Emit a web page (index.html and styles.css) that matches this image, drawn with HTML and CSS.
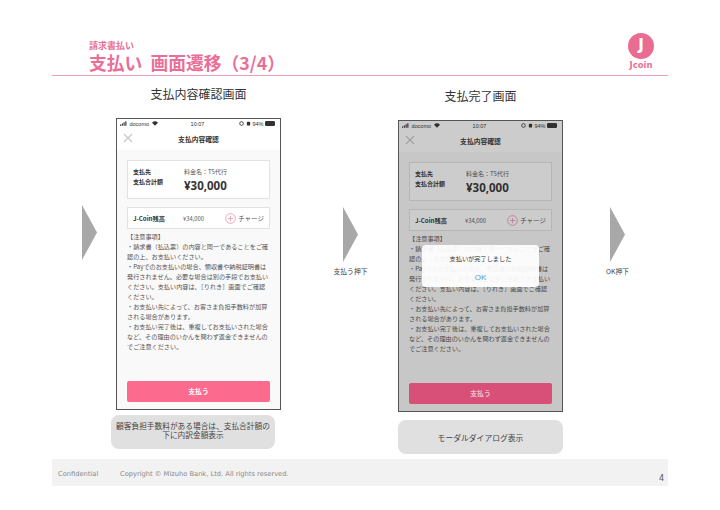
FILE: index.html
```html
<!DOCTYPE html>
<html lang="ja">
<head>
  <meta charset="UTF-8" />
  <title>支払い 画面遷移（3/4）</title>
  <link rel="stylesheet" href="styles.css">
</head>
<body>
  <div class="slide">
    <header class="head">
      <div class="head-text">
        <div class="head-sub">請求書払い</div>
        <h1>支払い&nbsp;&nbsp;画面遷移（3/4）</h1>
      </div>
      <div class="logo">
        <div class="logo-mark">J</div>
        <div class="logo-name">Jcoin</div>
      </div>
    </header>

    <main class="flow">
      <div class="step step-1">
        <svg class="arrow" viewBox="0 0 15 55"><polygon points="0,0 15,27.5 0,55" /></svg>
      </div>

      <section class="screen">
        <h2>支払内容確認画面</h2>
        <div class="phone">
          <div class="status">
            <span class="status-left">
              <svg class="signal" viewBox="0 0 9 5"><path d="M0 3.5h1.2V5H0zM2 2.4h1.2V5H2zM4 1.2h1.2V5H4zM6 0h1.2v5H6z" /></svg>
              docomo
              <svg class="wifi" viewBox="0 0 8 6"><path d="M4 6 0 2a5.7 5.7 0 0 1 8 0z" /></svg>
            </span>
            <span class="status-time">10:07</span>
            <span class="status-right">
              <svg class="alarm" viewBox="0 0 6 6"><circle cx="3" cy="3" r="2.2" fill="none" stroke="#333" /></svg>
              <svg class="alarm" viewBox="0 0 6 6"><rect x="1" y="1" width="4" height="4.4" rx="1" /></svg>
              94%
              <span class="battery"></span>
            </span>
          </div>
          <div class="nav">
            <svg class="close" viewBox="0 0 10 10"><path d="M1 1l8 8M9 1l-8 8" /></svg>
            <span class="nav-title">支払内容確認</span>
          </div>
          <div class="phone-body">
            <div class="card pay-card">
              <div class="pay-labels">
                <div>支払先</div>
                <div>支払合計額</div>
              </div>
              <div>
                <div class="pay-name">料金名：TS代行</div>
                <div class="pay-amount">¥30,000</div>
              </div>
            </div>
            <div class="card balance-card">
              <span class="balance-label">J-Coin残高</span>
              <span class="balance-value">¥34,000</span>
              <span class="charge">
                <svg class="plus" viewBox="0 0 12 12"><circle cx="6" cy="6" r="5.3" /><path d="M6 3v6M3 6h6" /></svg>
                チャージ
              </span>
            </div>
            <div class="terms">
              <div>【注意事項】</div>
              <div>・請求書（払込票）の内容と同一であることをご確</div>
              <div>認の上、お支払いください。</div>
              <div>・Payでのお支払いの場合、領収書や納税証明書は</div>
              <div>発行されません。必要な場合は別の手段でお支払い</div>
              <div>ください。支払い内容は、［りれき］画面でご確認</div>
              <div>ください。</div>
              <div>・お支払い先によって、お客さま負担手数料が加算</div>
              <div>される場合があります。</div>
              <div>・お支払い完了後は、重複してお支払いされた場合</div>
              <div>など、その理由のいかんを問わず返金できませんの</div>
              <div>でご注意ください。</div>
            </div>
            <div class="pay-btn">支払う</div>
          </div>
        </div>
        <div class="note note-1">顧客負担手数料がある場合は、支払合計額の<br>下に内訳金額表示</div>
      </section>

      <div class="step step-2">
        <svg class="arrow" viewBox="0 0 15 55"><polygon points="0,0 15,27.5 0,55" /></svg>
        <div class="step-label">支払う押下</div>
      </div>

      <section class="screen screen-done">
        <h2>支払完了画面</h2>
        <div class="phone">
          <div class="status">
            <span class="status-left">
              <svg class="signal" viewBox="0 0 9 5"><path d="M0 3.5h1.2V5H0zM2 2.4h1.2V5H2zM4 1.2h1.2V5H4zM6 0h1.2v5H6z" /></svg>
              docomo
              <svg class="wifi" viewBox="0 0 8 6"><path d="M4 6 0 2a5.7 5.7 0 0 1 8 0z" /></svg>
            </span>
            <span class="status-time">10:07</span>
            <span class="status-right">
              <svg class="alarm" viewBox="0 0 6 6"><circle cx="3" cy="3" r="2.2" fill="none" stroke="#333" /></svg>
              <svg class="alarm" viewBox="0 0 6 6"><rect x="1" y="1" width="4" height="4.4" rx="1" /></svg>
              94%
              <span class="battery"></span>
            </span>
          </div>
          <div class="nav">
            <svg class="close" viewBox="0 0 10 10"><path d="M1 1l8 8M9 1l-8 8" /></svg>
            <span class="nav-title">支払内容確認</span>
          </div>
          <div class="phone-body">
            <div class="card pay-card">
              <div class="pay-labels">
                <div>支払先</div>
                <div>支払合計額</div>
              </div>
              <div>
                <div class="pay-name">料金名：TS代行</div>
                <div class="pay-amount">¥30,000</div>
              </div>
            </div>
            <div class="card balance-card">
              <span class="balance-label">J-Coin残高</span>
              <span class="balance-value">¥34,000</span>
              <span class="charge">
                <svg class="plus" viewBox="0 0 12 12"><circle cx="6" cy="6" r="5.3" /><path d="M6 3v6M3 6h6" /></svg>
                チャージ
              </span>
            </div>
            <div class="terms">
              <div>【注意事項】</div>
              <div>・請求書（払込票）の内容と同一であることをご確</div>
              <div>認の上、お支払いください。</div>
              <div>・Payでのお支払いの場合、領収書や納税証明書は</div>
              <div>発行されません。必要な場合は別の手段でお支払い</div>
              <div>ください。支払い内容は、［りれき］画面でご確認</div>
              <div>ください。</div>
              <div>・お支払い先によって、お客さま負担手数料が加算</div>
              <div>される場合があります。</div>
              <div>・お支払い完了後は、重複してお支払いされた場合</div>
              <div>など、その理由のいかんを問わず返金できませんの</div>
              <div>でご注意ください。</div>
            </div>
            <div class="pay-btn">支払う</div>
          </div>
          <div class="overlay"></div>
          <div class="dialog">
            <div class="dialog-text">支払いが完了しました</div>
            <div class="dialog-ok">OK</div>
          </div>
        </div>
        <div class="note">モーダルダイアログ表示</div>
      </section>

      <div class="step step-3">
        <svg class="arrow" viewBox="0 0 15 55"><polygon points="0,0 15,27.5 0,55" /></svg>
        <div class="step-label">OK押下</div>
      </div>
    </main>

    <footer class="foot">
      <span class="foot-conf">Confidential</span>
      <span class="foot-copy">Copyright © Mizuho Bank, Ltd. All rights reserved.</span>
      <span class="foot-page">4</span>
    </footer>
  </div>
</body>
</html>
```

FILE: styles.css
```css
* {
  box-sizing: border-box;
}

body {
  margin: 0;
  background-color: #fff;
  color: #444;
  font-family: 'Noto Sans CJK JP', sans-serif;
}

.slide {
  width: 720px;
  height: 510px;
  overflow: hidden;
  display: flex;
  flex-direction: column;
}

/* header */
.head {
  height: 76px;
  margin: 0 52px;
  padding: 32px 14px 0 37px;
  border-bottom: 1px solid #ee9db7;
  display: flex;
  justify-content: space-between;
}

.head-sub {
  font-size: 9px;
  line-height: 10px;
  font-weight: bold;
  color: #e96f98;
  margin-top: 9px;
}

.head h1 {
  margin: 1px 0 0;
  font-size: 17.8px;
  line-height: 20px;
  font-weight: bold;
  color: #e96f98;
}

.logo {
  margin-top: 1px;
  display: flex;
  flex-direction: column;
  align-items: center;
}

.logo-mark {
  width: 26px;
  height: 26px;
  border-radius: 50%;
  background-color: #ea6c93;
  color: #fff;
  font-family: 'DejaVu Sans', sans-serif;
  font-size: 15px;
  line-height: 25px;
  font-weight: bold;
  text-align: center;
}

.logo-name {
  font-family: 'DejaVu Sans', sans-serif;
  font-size: 8.5px;
  line-height: 12px;
  font-weight: bold;
  color: #e96f98;
}

/* screens and arrows */
.flow {
  flex: 1;
  display: grid;
  grid-template-columns: 116px 165px 117px 165px 1fr;
}

.screen h2 {
  margin: 9px 0 0;
  height: 33px;
  font-size: 12px;
  line-height: 17px;
  font-weight: normal;
  text-align: center;
  color: #333;
}

.screen-done h2 {
  margin-top: 11px;
}

.step {
  display: flex;
  flex-direction: column;
  align-items: center;
  width: 15px;
}

.step-1 {
  margin: 129px 0 0 82px;
}

.step-2 {
  margin: 131px 0 0 62px;
}

.step-3 {
  margin: 131px 0 0 47px;
}

.arrow {
  width: 15px;
  height: 55px;
  flex-shrink: 0;
  fill: #a8a8a8;
}

.step-label {
  margin-top: 4px;
  font-size: 6.8px;
  line-height: 10px;
  white-space: nowrap;
}

/* phone */
.phone {
  position: relative;
  height: 292px;
  border: 1px solid #555;
  background-color: #fff;
  display: flex;
  flex-direction: column;
}

.status {
  height: 9px;
  padding: 0 5px 0 3px;
  display: grid;
  grid-template-columns: 1fr auto 1fr;
  align-items: center;
  font-family: 'Liberation Sans', sans-serif;
  font-size: 5.5px;
  color: #333;
}

.status-left,
.status-right {
  display: flex;
  align-items: center;
  gap: 1.5px;
}

.status-right {
  justify-content: flex-end;
}

.signal {
  width: 8px;
  height: 5px;
  fill: #222;
}

.wifi {
  width: 6px;
  height: 5px;
  margin-left: 1px;
  fill: #333;
}

.alarm {
  width: 5px;
  height: 5px;
  fill: #333;
}

.battery {
  width: 10px;
  height: 5px;
  border: 1px solid #333;
  border-radius: 1px;
  background-color: #333;
}

.nav {
  position: relative;
  height: 22px;
  display: flex;
  align-items: center;
  justify-content: center;
}

.nav-title {
  font-size: 6.8px;
  font-weight: bold;
  color: #333;
}

.close {
  position: absolute;
  left: 6px;
  top: 5px;
  width: 10px;
  height: 10px;
  fill: none;
  stroke: #c8c8c8;
  stroke-width: 1.2;
}

.phone-body {
  flex: 1;
  background-color: #f9f9f9;
  padding: 10px 10px 7px;
  display: flex;
  flex-direction: column;
}

.card {
  background-color: #fff;
  border: 1px solid #e2e2e2;
  padding: 0 5px;
  display: flex;
}

.pay-card {
  height: 39px;
}

.pay-labels {
  width: 51px;
  padding-top: 6px;
  font-size: 6px;
  line-height: 10px;
  font-weight: bold;
  color: #333;
}

.pay-name {
  padding-top: 6px;
  font-size: 6px;
  line-height: 9px;
  color: #555;
}

.pay-amount {
  margin-top: 2px;
  font-family: 'Noto Sans', sans-serif;
  font-size: 11.5px;
  line-height: 15px;
  font-weight: bold;
  color: #333;
}

.balance-card {
  height: 22px;
  margin-top: 8px;
  align-items: center;
}

.balance-label {
  width: 51px;
  font-size: 6.2px;
  font-weight: bold;
  color: #333;
}

.balance-value {
  width: 43px;
  font-size: 5.8px;
  color: #555;
}

.charge {
  display: flex;
  align-items: center;
  gap: 2px;
  font-size: 6.5px;
  white-space: nowrap;
  color: #555;
}

.plus {
  width: 11px;
  height: 11px;
  fill: none;
  stroke: #e58aa6;
  stroke-width: 0.8;
}

.terms {
  margin-top: 3px;
  font-size: 6.15px;
  line-height: 10px;
  white-space: nowrap;
  color: #555;
}

.pay-btn {
  margin-top: auto;
  height: 21px;
  border-radius: 2px;
  background-color: #fc6a8d;
  color: #fff;
  font-size: 6.8px;
  font-weight: bold;
  line-height: 21px;
  text-align: center;
}

.overlay {
  position: absolute;
  inset: 0;
  background-color: rgba(40, 40, 40, 0.24);
}

.screen-done .pay-btn {
  position: relative;
  z-index: 1;
  background-color: #d85077;
  color: #f3c5d2;
}

.dialog {
  position: absolute;
  left: 23px;
  top: 124px;
  width: 117px;
  height: 42px;
  border-radius: 4px;
  background-color: rgba(255, 255, 255, 0.93);
  text-align: center;
}

.dialog-text {
  margin-top: 9px;
  font-size: 6.2px;
  line-height: 10px;
  color: #333;
}

.dialog-ok {
  margin-top: 9px;
  font-family: 'Liberation Sans', sans-serif;
  font-size: 8px;
  line-height: 10px;
  color: #5b9bd0;
}

/* notes under the phones */
.note {
  height: 34px;
  margin-top: 8px;
  border-radius: 8px;
  background-color: #e0e0e0;
  display: flex;
  align-items: center;
  justify-content: center;
  text-align: center;
  font-size: 7.8px;
  line-height: 9px;
  color: #444;
}

.note-1 {
  margin: 5px 6px 0 -5px;
  padding-top: 6px;
  display: block;
  font-size: 7.7px;
  white-space: nowrap;
}

/* footer */
.foot {
  height: 27px;
  margin: 0 52px 24px;
  background-color: #f2f2f2;
  display: flex;
  padding: 10px 6px 0;
  font-family: 'DejaVu Sans', sans-serif;
  font-size: 6.7px;
  line-height: 10px;
  color: #888;
}

.foot-conf {
  width: 62px;
}

.foot-page {
  margin-left: auto;
  margin-top: 5px;
  margin-right: -2px;
  font-size: 8px;
  color: #555;
}
```
